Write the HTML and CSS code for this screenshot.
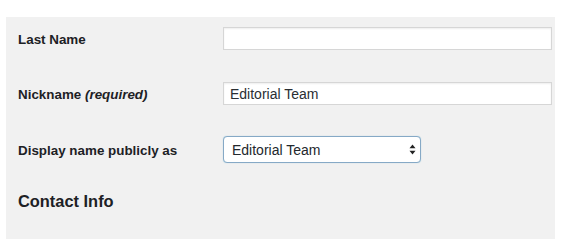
FILE: index.html
```html
<!DOCTYPE html>
<html lang="en">
<head>
<meta charset="utf-8">
<title>Profile</title>
<link rel="stylesheet" href="styles.css">
</head>
<body>
<div class="panel">
  <div class="row row-last">
    <label class="label" for="last-name">Last Name</label>
    <input class="text-input" id="last-name" type="text" value="">
  </div>
  <div class="row row-nick">
    <label class="label" for="nickname">Nickname <em class="req">(required)</em></label>
    <input class="text-input" id="nickname" type="text" value="Editorial Team">
  </div>
  <div class="row row-display">
    <label class="label" for="display-name">Display name publicly as</label>
    <div class="select-wrap">
      <select class="select" id="display-name">
        <option>Editorial Team</option>
      </select>
      <svg class="select-arrows" width="7" height="11" viewBox="0 0 7 11" aria-hidden="true">
        <path d="M3.5 0.5 L6.5 4.3 L0.5 4.3 Z" fill="#222"/>
        <path d="M3.5 10.5 L6.5 6.7 L0.5 6.7 Z" fill="#222"/>
      </svg>
    </div>
  </div>
  <h2 class="heading">Contact Info</h2>
</div>
</body>
</html>
```
FILE: styles.css
```css
html, body {
  margin: 0;
  padding: 0;
  background: #ffffff;
}

body {
  font-family: "Liberation Sans", Arial, sans-serif;
  color: #23282d;
}

.panel {
  box-sizing: border-box;
  margin: 17px 0 0 6px;
  width: 549px;
  height: 222px;
  background: #f1f1f1;
  padding: 10px 0 0 12px;
  display: flex;
  flex-direction: column;
}

.row {
  display: flex;
  align-items: center;
}

.row-nick {
  margin-top: 32px;
}

.row-display {
  margin-top: 31px;
}

.label {
  box-sizing: border-box;
  width: 205px;
  flex: none;
  font-size: 13.4px;
  font-weight: bold;
  padding-top: 2px;
  line-height: 16px;
  color: #1d2125;
}

.req {
  font-style: italic;
}

.text-input {
  box-sizing: border-box;
  width: 329px;
  height: 23px;
  margin: 0;
  border: 1px solid #d6d6d6;
  background: #ffffff;
  box-shadow: inset 0 1px 2px rgba(0, 0, 0, 0.07);
  padding: 0 6px;
  font-family: "Liberation Sans", Arial, sans-serif;
  font-size: 14px;
  color: #2a2e33;
  outline: none;
}

.select-wrap {
  position: relative;
  width: 198px;
  height: 27px;
}

.select {
  -webkit-appearance: none;
  appearance: none;
  box-sizing: border-box;
  width: 198px;
  height: 27px;
  margin: 0;
  border: 1px solid #86a9c6;
  border-radius: 4px;
  background: #ffffff;
  box-shadow: 0 0 1px rgba(30, 140, 190, 0.4);
  padding: 0 20px 0 8px;
  font-family: "Liberation Sans", Arial, sans-serif;
  font-size: 14px;
  color: #23282d;
  outline: none;
}

.select-arrows {
  position: absolute;
  right: 5px;
  top: 8px;
  pointer-events: none;
}

.heading {
  margin: 28px 0 0 0;
  font-size: 16.4px;
  line-height: 20px;
  font-weight: bold;
  color: #1d2125;
}
```
